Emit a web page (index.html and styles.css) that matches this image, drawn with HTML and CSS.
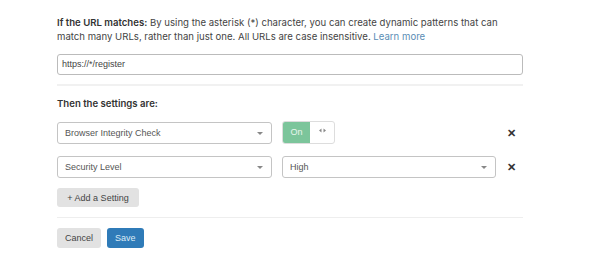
FILE: index.html
```html
<!DOCTYPE html>
<html lang="en">
<head>
    <meta charset="UTF-8">
    <meta name="viewport" content="width=device-width, initial-scale=1.0">
    <title>Page Rule</title>
    <link rel="stylesheet" href="styles.css">
</head>
<body>
    <div class="rule-form">
        <!-- URL pattern -->
        <p class="intro"><strong>If the URL matches:</strong> By using the asterisk (*) character, you can create dynamic patterns that can match many URLs, rather than just one. All URLs are case insensitive. <a href="#" class="learn">Learn more</a></p>

        <div class="url-field">https://*/register</div>

        <div class="divider thick"></div>

        <h2>Then the settings are:</h2>

        <div class="settings">
            <div class="select">Browser Integrity Check<span class="caret"></span></div>
            <div class="toggle">
                <span class="toggle-on">On</span>
                <span class="toggle-off">
                    <svg width="7" height="5" viewBox="0 0 7 5"><path d="M0 2.5L2.5 0.5V4.5Z M7 2.5L4.5 0.5V4.5Z" fill="#888"/></svg>
                </span>
            </div>
            <span class="remove">&#x2715;</span>

            <div class="select">Security Level<span class="caret"></span></div>
            <div class="select wide">High<span class="caret"></span></div>
            <span class="remove">&#x2715;</span>
        </div>

        <button class="btn add-btn">+ Add a Setting</button>

        <div class="divider"></div>

        <div class="actions">
            <button class="btn">Cancel</button>
            <button class="btn save">Save</button>
        </div>
    </div>
</body>
</html>
```

FILE: styles.css
```css
/* Global Styles */
body {
    margin: 0;
    background: #fff;
    font-family: 'Liberation Sans', Arial, sans-serif;
    color: #404040;
}

.rule-form {
    width: 466px;
    padding: 16px 0 0 57px;
}

.intro {
    margin: 0;
    font-family: Inter, 'Liberation Sans', sans-serif;
    font-size: 9.6px;
    line-height: 14px;
    color: #444;
}

.intro strong {
    color: #333;
    font-weight: 600;
}

.learn {
    color: #5b8db5;
    text-decoration: none;
}

.url-field {
    margin-top: 10px;
    width: 456px;
    height: 19px;
    line-height: 19px;
    padding: 0 4px;
    border: 1px solid #bbb;
    border-radius: 3px;
    font-size: 9px;
    color: #444;
}

.divider {
    height: 1px;
    background: #eee;
    margin: 10px 0;
}

.divider.thick {
    height: 2px;
    background: #f1f1f1;
    margin: 9px 0 0;
}

h2 {
    margin: 11px 0 0;
    font-family: Inter, 'Liberation Sans', sans-serif;
    font-size: 9.6px;
    font-weight: 600;
    line-height: 14px;
    color: #333;
}

/* Settings rows */
.settings {
    display: grid;
    grid-template-columns: 215px 214px 1fr;
    column-gap: 10px;
    row-gap: 12px;
    align-items: center;
    margin-top: 11px;
}

.select {
    position: relative;
    height: 20px;
    line-height: 20px;
    padding: 0 7px;
    border: 1px solid #c4c4c4;
    border-radius: 3px;
    font-size: 9px;
    color: #555;
}

.caret {
    position: absolute;
    right: 8px;
    top: 9px;
    border-left: 3px solid transparent;
    border-right: 3px solid transparent;
    border-top: 3px solid #888;
}

.toggle {
    display: flex;
    width: 51px;
    height: 21px;
    border: 1px solid #ddd;
    border-radius: 3px;
    overflow: hidden;
    margin-top: -2px;
}

.toggle-on {
    width: 27px;
    background: #7cc59b;
    color: #e9f6ee;
    font-size: 9px;
    line-height: 21px;
    text-align: center;
}

.toggle-off {
    flex: 1;
    display: flex;
    justify-content: center;
    align-items: center;
    padding-bottom: 3px;
}

.remove {
    font-size: 11px;
    font-weight: bold;
    color: #333;
    padding-left: 1px;
    line-height: 10px;
}

/* Buttons */
.btn {
    height: 20px;
    padding: 0 8px;
    border: none;
    border-radius: 3px;
    background: #e2e2e2;
    color: #444;
    font-family: 'Liberation Sans', Arial, sans-serif;
    font-size: 9px;
}

.add-btn {
    margin-top: 10px;
    width: 82px;
    height: 19px;
}

.actions {
    display: flex;
    gap: 6px;
}

.save {
    background: #2f7bb8;
    color: #dcebf6;
}
```
